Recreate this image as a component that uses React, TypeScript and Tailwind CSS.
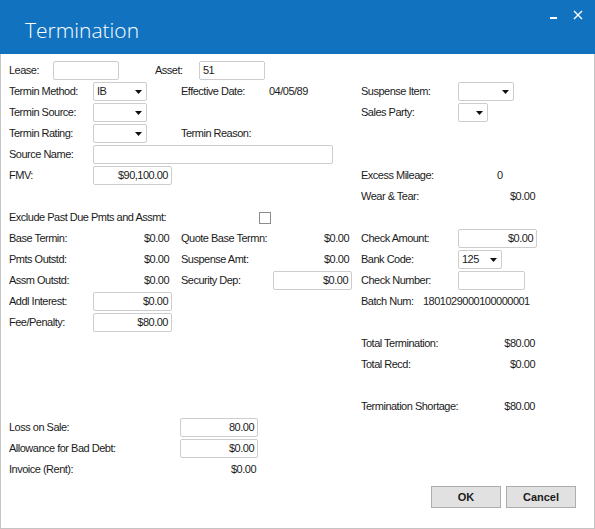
import type { ReactNode } from 'react'

function Field({ className = '', value = '', left = false }: { className?: string; value?: string; left?: boolean }) {
  return (
    <div
      className={`h-[19px] shrink-0 border border-[#cdcdcd] rounded-[2px] bg-white flex items-center px-[3px] ${left ? 'justify-start' : 'justify-end'} ${className}`}
    >
      {value}
    </div>
  )
}

function Combo({ className = '', value = '' }: { className?: string; value?: string }) {
  return (
    <div className={`h-[19px] shrink-0 border border-[#cdcdcd] rounded-[2px] bg-white flex items-center justify-between pl-[3px] pr-[4px] ${className}`}>
      <span>{value}</span>
      <svg width="7" height="4" viewBox="0 0 7 4">
        <path d="M0 0h7L3.5 4z" fill="#111" />
      </svg>
    </div>
  )
}

const Row = ({ children }: { children?: ReactNode }) => <div className="flex h-[21px] items-center">{children}</div>

// left column: label 84px + control 79px, 9px gap to the middle column
const ColA = ({ children }: { children?: ReactNode }) => <div className="flex w-[172px] shrink-0 items-center">{children}</div>
const ColB = ({ children }: { children?: ReactNode }) => <div className="flex w-[180px] shrink-0 items-center">{children}</div>
const ColC = ({ children }: { children?: ReactNode }) => <div className="flex w-[176px] shrink-0 items-center">{children}</div>

const LabelA = ({ children }: { children: ReactNode }) => <span className="w-[84px] shrink-0">{children}</span>
const LabelB = ({ children }: { children: ReactNode }) => <span className="w-[92px] shrink-0">{children}</span>
const LabelC = ({ children }: { children: ReactNode }) => <span className="w-[97px] shrink-0">{children}</span>
const Amount = ({ children }: { children: ReactNode }) => <span className="w-[79px] shrink-0 text-right pr-[3px]">{children}</span>

export default function App() {
  return (
    <div className="w-[595px] h-[529px] flex flex-col bg-white font-['Liberation_Sans',Arial,sans-serif] text-[11px] tracking-[-0.5px] text-[#1b1b1b]">
      {/* title bar */}
      <div className="h-[54px] shrink-0 bg-[#1172bf] flex justify-between text-white">
        <div className="pl-[25px] pt-[18px] text-[21px] leading-[24px] font-light tracking-normal font-['Open_Sans',sans-serif]">
          Termination
        </div>
        <div className="flex items-start gap-[14px] pt-[10px] pr-[12px]">
          <svg width="10" height="10" viewBox="0 0 10 10">
            <rect x="1" y="7" width="7" height="2" fill="#fff" />
          </svg>
          <svg width="10" height="10" viewBox="0 0 10 10">
            <path d="M1 1l8 8M9 1l-8 8" stroke="#fff" strokeWidth="1.4" />
          </svg>
        </div>
      </div>

      <div className="flex-1 border-x border-b border-[#c4c4c4] pl-[8px] pt-[6px] flex flex-col">
        <Row>
          <span className="w-[44px] shrink-0">Lease:</span>
          <Field className="w-[66px]" />
          <span className="ml-[36px] w-[44px] shrink-0">Asset:</span>
          <Field className="w-[66px]" value="51" left />
        </Row>
        <Row>
          <ColA>
            <LabelA>Termin Method:</LabelA>
            <Combo className="w-[54px]" value="IB" />
          </ColA>
          <ColB>
            <span className="w-[88px] shrink-0">Effective Date:</span>
            <span>04/05/89</span>
          </ColB>
          <ColC>
            <LabelC>Suspense Item:</LabelC>
            <Combo className="w-[56px]" />
          </ColC>
        </Row>
        <Row>
          <ColA>
            <LabelA>Termin Source:</LabelA>
            <Combo className="w-[54px]" />
          </ColA>
          <ColB />
          <ColC>
            <LabelC>Sales Party:</LabelC>
            <Combo className="w-[30px]" />
          </ColC>
        </Row>
        <Row>
          <ColA>
            <LabelA>Termin Rating:</LabelA>
            <Combo className="w-[54px]" />
          </ColA>
          <ColB>
            <span>Termin Reason:</span>
          </ColB>
        </Row>
        <Row>
          <LabelA>Source Name:</LabelA>
          <Field className="w-[240px]" />
        </Row>
        <Row>
          <ColA>
            <LabelA>FMV:</LabelA>
            <Field className="w-[79px]" value="$90,100.00" />
          </ColA>
          <ColB />
          <ColC>
            <span className="w-[136px] shrink-0">Excess Mileage:</span>
            <span>0</span>
          </ColC>
        </Row>
        <Row>
          <div className="w-[352px] shrink-0" />
          <ColC>
            <span className="flex-1">Wear &amp; Tear:</span>
            <span className="pr-[2px]">$0.00</span>
          </ColC>
        </Row>
        <Row>
          <span className="w-[250px] shrink-0">Exclude Past Due Pmts and Assmt:</span>
          <div className="w-[12px] h-[12px] border border-[#8c8c8c] bg-white" />
        </Row>
        <Row>
          <ColA>
            <LabelA>Base Termin:</LabelA>
            <Amount>$0.00</Amount>
          </ColA>
          <ColB>
            <LabelB>Quote Base Termn:</LabelB>
            <Amount>$0.00</Amount>
          </ColB>
          <ColC>
            <LabelC>Check Amount:</LabelC>
            <Field className="w-[79px]" value="$0.00" />
          </ColC>
        </Row>
        <Row>
          <ColA>
            <LabelA>Pmts Outstd:</LabelA>
            <Amount>$0.00</Amount>
          </ColA>
          <ColB>
            <LabelB>Suspense Amt:</LabelB>
            <Amount>$0.00</Amount>
          </ColB>
          <ColC>
            <LabelC>Bank Code:</LabelC>
            <Combo className="w-[44px]" value="125" />
          </ColC>
        </Row>
        <Row>
          <ColA>
            <LabelA>Assm Outstd:</LabelA>
            <Amount>$0.00</Amount>
          </ColA>
          <ColB>
            <LabelB>Security Dep:</LabelB>
            <Field className="w-[79px]" value="$0.00" />
          </ColB>
          <ColC>
            <LabelC>Check Number:</LabelC>
            <Field className="w-[67px]" />
          </ColC>
        </Row>
        <Row>
          <ColA>
            <LabelA>Addl Interest:</LabelA>
            <Field className="w-[79px]" value="$0.00" />
          </ColA>
          <ColB />
          <ColC>
            <span className="w-[62px] shrink-0">Batch Num:</span>
            <span>1801029000100000001</span>
          </ColC>
        </Row>
        <Row>
          <ColA>
            <LabelA>Fee/Penalty:</LabelA>
            <Field className="w-[79px]" value="$80.00" />
          </ColA>
        </Row>
        <Row>
          <div className="w-[352px] shrink-0" />
          <ColC>
            <span className="flex-1">Total Termination:</span>
            <span className="pr-[2px]">$80.00</span>
          </ColC>
        </Row>
        <Row>
          <div className="w-[352px] shrink-0" />
          <ColC>
            <span className="flex-1">Total Recd:</span>
            <span className="pr-[2px]">$0.00</span>
          </ColC>
        </Row>
        <Row />
        <Row>
          <div className="w-[352px] shrink-0" />
          <ColC>
            <span className="flex-1">Termination Shortage:</span>
            <span className="pr-[2px]">$80.00</span>
          </ColC>
        </Row>
        <Row>
          <span className="w-[171px] shrink-0">Loss on Sale:</span>
          <Field className="w-[78px] border-[#7fa9d9]" value="80.00" />
        </Row>
        <Row>
          <span className="w-[171px] shrink-0">Allowance for Bad Debt:</span>
          <Field className="w-[78px]" value="$0.00" />
        </Row>
        <Row>
          <span className="w-[171px] shrink-0">Invoice (Rent):</span>
          <span className="w-[78px] shrink-0 text-right pr-[2px]">$0.00</span>
        </Row>

        <div className="flex justify-end gap-[5px] pr-[18px] mt-[6px] tracking-normal">
          <button className="w-[70px] h-[22px] bg-[#e1e1e1] border border-[#adadad] font-bold text-[11px]">OK</button>
          <button className="w-[70px] h-[22px] bg-[#e1e1e1] border border-[#adadad] font-bold text-[11px]">Cancel</button>
        </div>
      </div>
    </div>
  )
}
